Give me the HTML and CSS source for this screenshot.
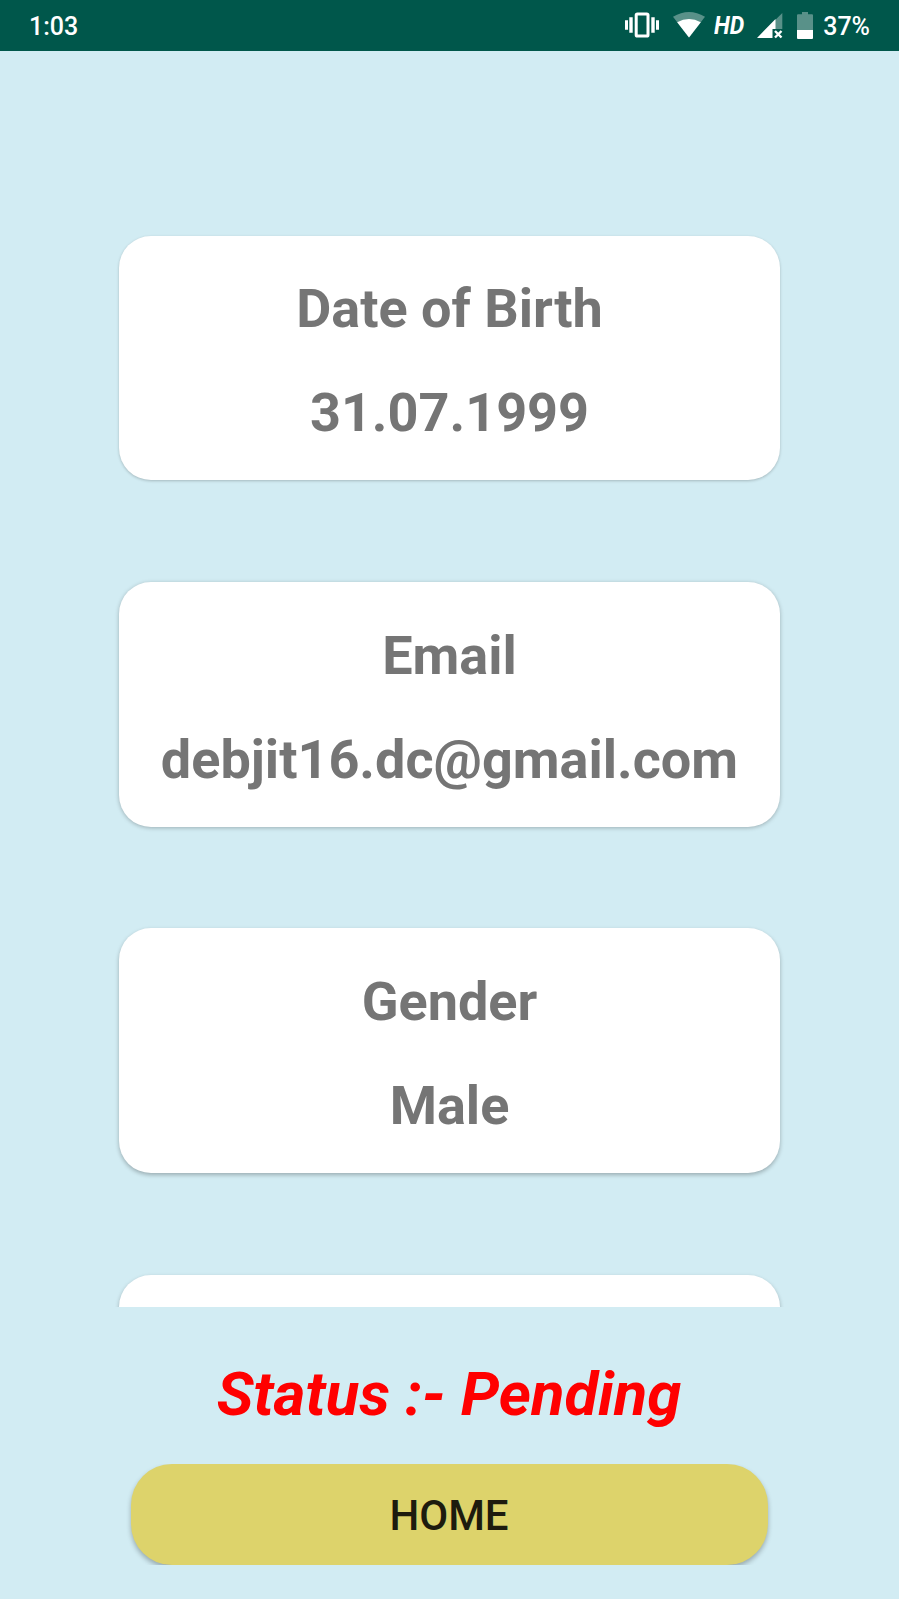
FILE: index.html
```html
<!DOCTYPE html>
<html lang="en">
<head>
<meta charset="utf-8">
<title>Profile</title>
<link rel="stylesheet" href="styles.css">
</head>
<body>
<header class="statusbar">
  <span class="time">1:03</span>
  <div class="indicators">
    <svg class="vibrate" viewBox="0 0 34 27" width="34" height="27"><path fill="#fff" d="M0 8.300h3v9.400H0zM4.300 5.300h3.400v15.400H4.300zM26.300 5.300h3.400v15.400h-3.400zM31 8.300h3v9.400h-3z"/><rect x="11.200" y="1.900" width="11.800" height="22.200" rx="1.200" fill="none" stroke="#fff" stroke-width="3"/></svg>
    <svg class="wifi" viewBox="0 0 32 27" width="32" height="27"><path fill="#fff" fill-opacity=".35" d="M0 4.800Q16-4.800 32 4.800L16 25.600z"/><path fill="#fff" d="M4.200 10.300Q16 3.500 27.800 10.300L16 25.600z"/></svg>
    <span class="hd">HD</span>
    <svg class="signal" viewBox="0 0 26 27" width="26" height="27"><path fill="#fff" fill-opacity=".35" d="M25.300 1v16H18V8.300z"/><path fill="#fff" d="M18.500 7V17h-3v9H0z"/><path stroke="#fff" stroke-width="2.400" d="M18 19l6.500 6.500m0-6.500L18 25.500"/></svg>
    <svg class="battery" viewBox="0 0 16 27" width="16" height="27"><path fill="#fff" fill-opacity=".35" d="M5 0h6v2.300h4q1 0 1 1V18H0V3.300q0-1 1-1h4z"/><path fill="#fff" d="M0 18h16v8q0 1-1 1H1q-1 0-1-1z"/></svg>
    <span class="percent">37%</span>
  </div>
</header>
<main class="cards">
  <section class="card"><p>Date of Birth</p><p>31.07.1999</p></section>
  <section class="card"><p>Email</p><p>debjit16.dc@gmail.com</p></section>
  <section class="card"><p>Gender</p><p>Male</p></section>
  <section class="card"></section>
</main>
<footer class="footer">
  <p class="status">Status :- Pending</p>
  <div class="button-clip"><button class="home">HOME</button></div>
</footer>
</body>
</html>
```
FILE: styles.css
```css
* { box-sizing: border-box; }
body { margin: 0; height: 1599px; overflow: hidden; background: #d2ecf3; font-family: Roboto, sans-serif; display: flex; flex-direction: column; }
p { margin: 0; }
.statusbar { height: 51px; flex: none; background: #00574b; color: #fff; display: flex; justify-content: space-between; align-items: center; padding: 0 29px 0 29px; font-size: 25px; font-weight: 500; }
.time, .percent { padding-top: 2px; }
.indicators { display: flex; align-items: center; }
.wifi { margin-left: 14px; }
.hd { width: 31px; margin-left: 9px; padding-bottom: 1px; font-weight: 700; font-style: italic; font-size: 25.5px; transform: scaleX(.9); transform-origin: left; }
.signal { margin-left: 12px; }
.battery { margin: 0 10px 0 14px; }
.cards { height: 1256px; flex: none; overflow: hidden; padding-top: 184.6px; display: flex; flex-direction: column; align-items: center; gap: 101.8px; }
.card { width: 661px; height: 244.6px; flex: none; padding-top: 41.8px; border-radius: 32px; background: #fff; box-shadow: 0 1px 3px rgba(0,0,0,.22); color: #757575; font-size: 54px; font-weight: 700; line-height: 63px; text-align: center; display: flex; flex-direction: column; gap: 41px; white-space: nowrap; }
.card:nth-child(2) { box-shadow: 0 1px 4px rgba(0,0,0,.26); }
.card:nth-child(n+3) { box-shadow: 0 2px 4px rgba(0,0,0,.27); }
.footer { display: flex; flex-direction: column; align-items: center; padding: 51px 1px 0 0; }
.status { color: #f00; font-size: 61.5px; line-height: 72px; font-weight: 700; font-style: italic; }
.button-clip { margin-top: 34px; height: 101px; padding: 0 6px; overflow: hidden; }
.home { display: block; width: 637px; height: 101px; padding: 2px 0 0; border: 0; border-radius: 41px; background: #ddd36b; color: #1d1b0e; font: 500 42px Roboto, sans-serif; box-shadow: 0 3px 5px rgba(0,0,0,.28); }
```
